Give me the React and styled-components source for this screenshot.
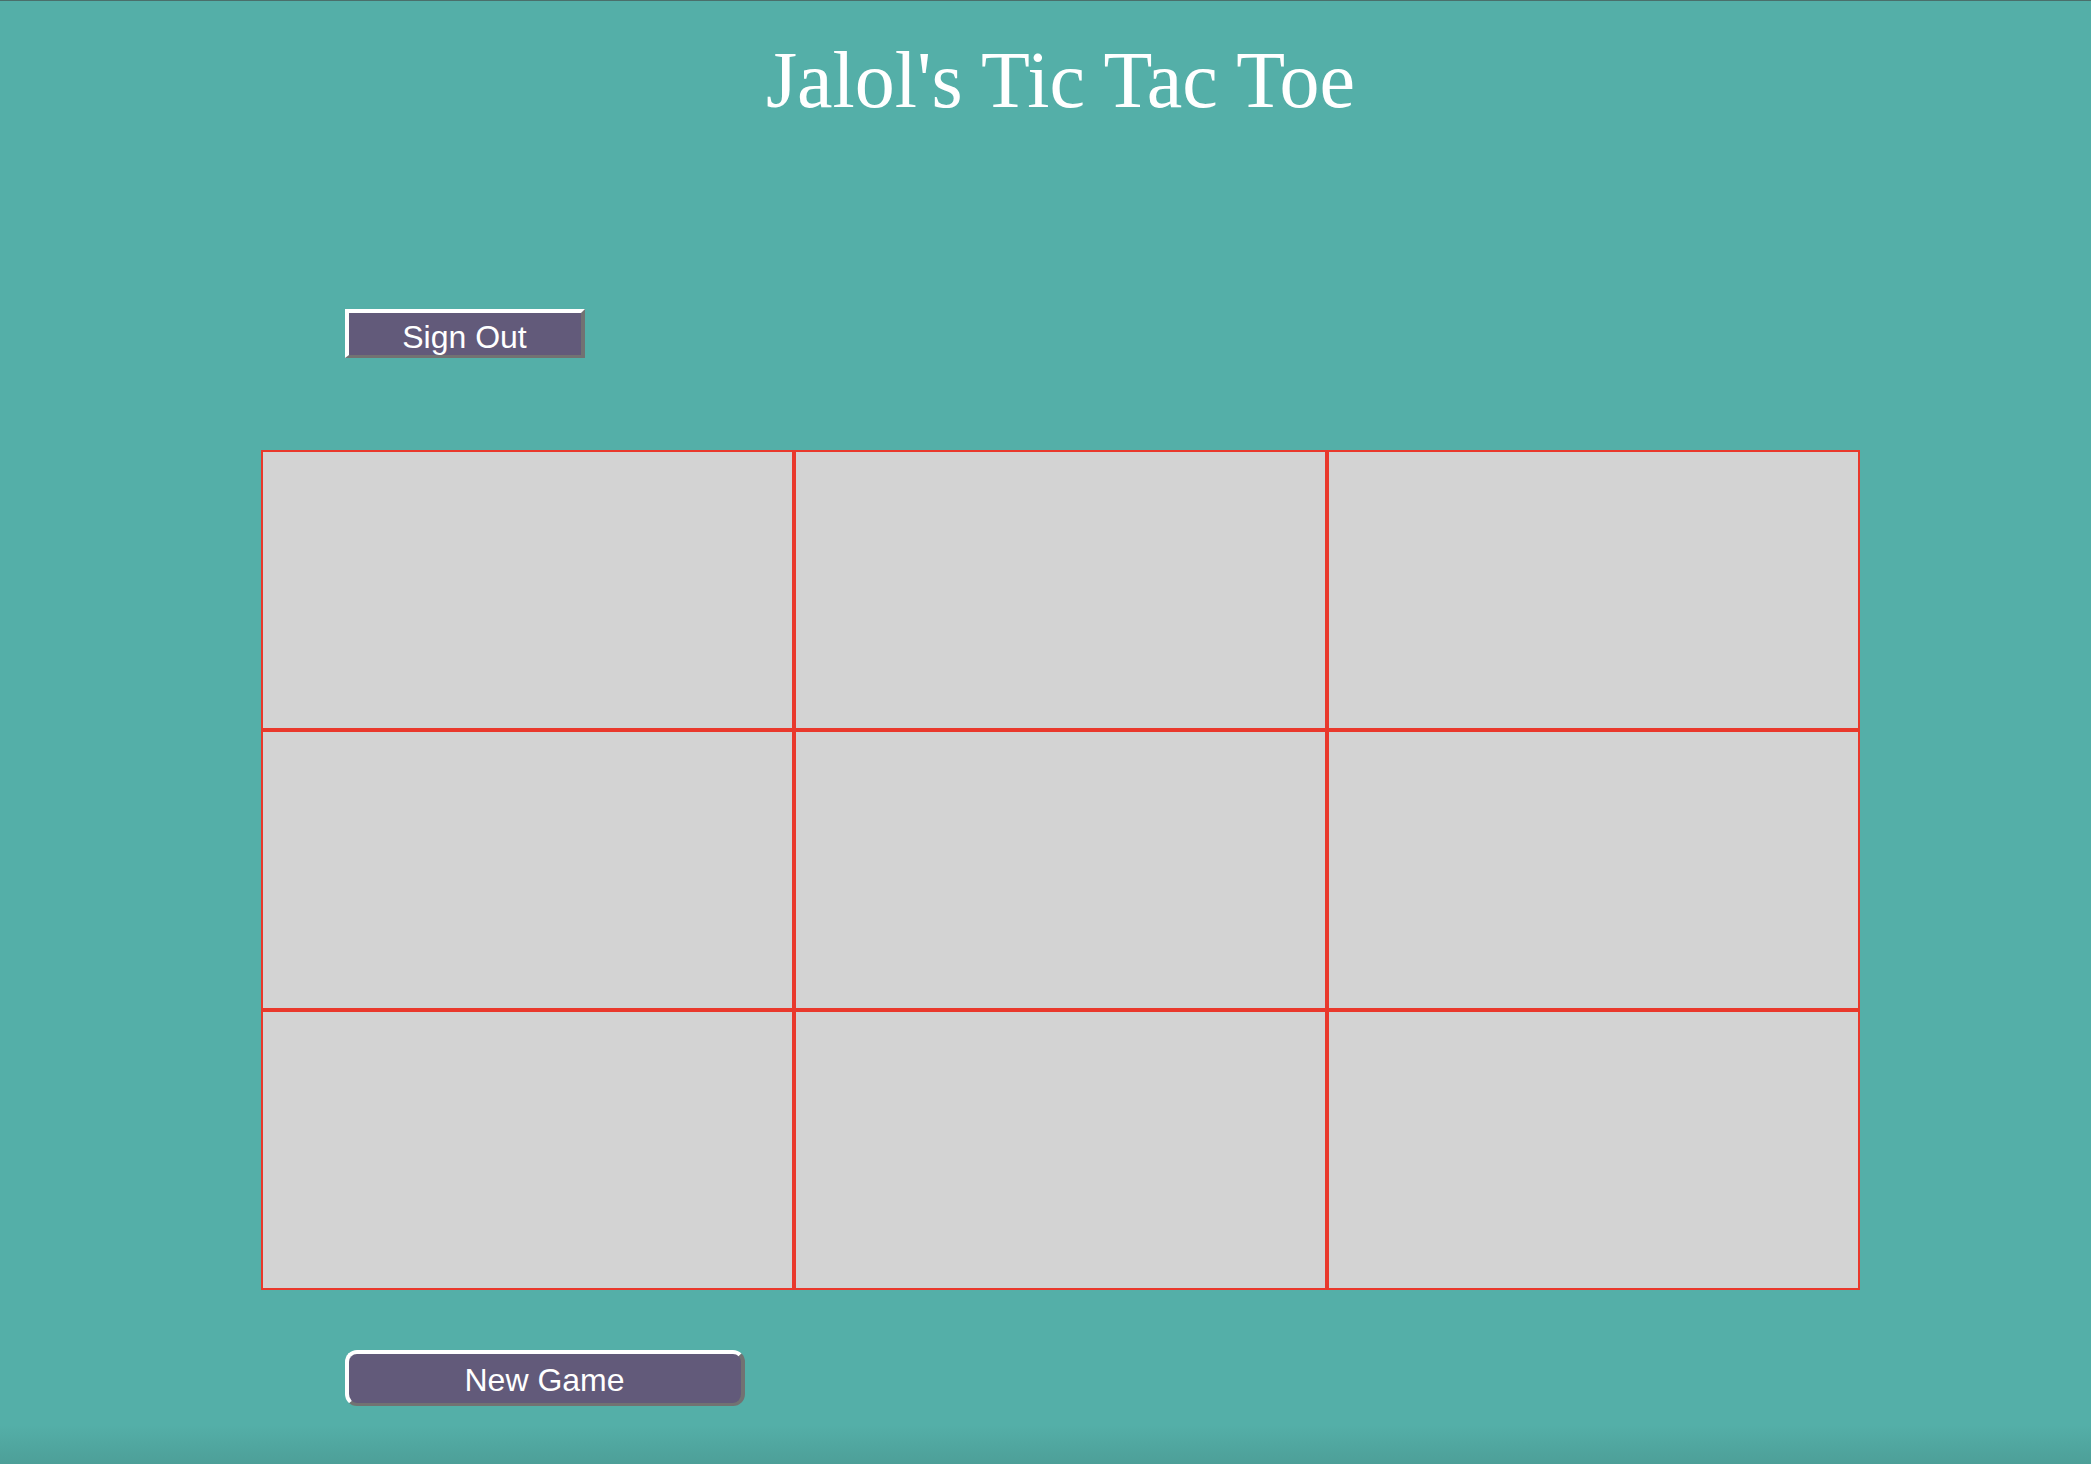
import React from "react";
import styled, { createGlobalStyle } from "styled-components";

const GlobalStyle = createGlobalStyle`
  html, body {
    margin: 0;
    padding: 0;
  }
  body {
    min-height: 1464px;
    background: linear-gradient(to bottom, #54afa8 0, #54afa8 1425px, #4d9f98 1464px);
    border-top: 1px solid #4a6f6b;
    box-sizing: border-box;
    font-family: "Liberation Serif", "Times New Roman", serif;
  }
`;

const Page = styled.div`
  width: 1600px;
  margin: 0 auto;
  padding-left: 30px;
  padding-top: 39px;
  padding-bottom: 57px;
`;

const Title = styled.h1`
  margin: 0;
  font-family: "Liberation Serif", "Times New Roman", serif;
  font-weight: normal;
  font-size: 80px;
  line-height: 80px;
  color: #fff;
  text-align: center;
`;

const Controls = styled.div`
  display: flex;
  padding-left: 84px;
  margin-top: ${(p) => p.$top}px;
`;

const Button = styled.button`
  box-sizing: border-box;
  width: ${(p) => p.$width}px;
  height: ${(p) => p.$height}px;
  padding: ${(p) => p.$pad || 0}px 0 0 0;
  background: #625a7a;
  color: #fff;
  font-family: "Liberation Sans", Arial, sans-serif;
  font-size: 32px;
  line-height: 1;
  border-style: solid;
  border-width: 4px 4px 3px 4px;
  border-color: #ffffff #727272 #727272 #ffffff;
  border-radius: ${(p) => p.$radius || 0}px;
  cursor: pointer;
`;

const Board = styled.div`
  margin-top: 92px;
  display: grid;
  grid-template-columns: repeat(3, 1fr);
  grid-template-rows: repeat(3, 280px);
`;

const Cell = styled.div`
  box-sizing: border-box;
  background: #d3d3d3;
  border: 2px solid #e9382b;
`;

export default function App() {
  const cells = Array.from({ length: 9 });
  return (
    <>
      <GlobalStyle />
      <Page>
        <Title>Jalol's Tic Tac Toe</Title>
        <Controls $top={189}>
          <Button $width={240} $height={49} $pad={6}>
            Sign Out
          </Button>
        </Controls>
        <Board>
          {cells.map((_, i) => (
            <Cell key={i} />
          ))}
        </Board>
        <Controls $top={60}>
          <Button $width={400} $height={56} $radius={12} $pad={2}>
            New Game
          </Button>
        </Controls>
      </Page>
    </>
  );
}
